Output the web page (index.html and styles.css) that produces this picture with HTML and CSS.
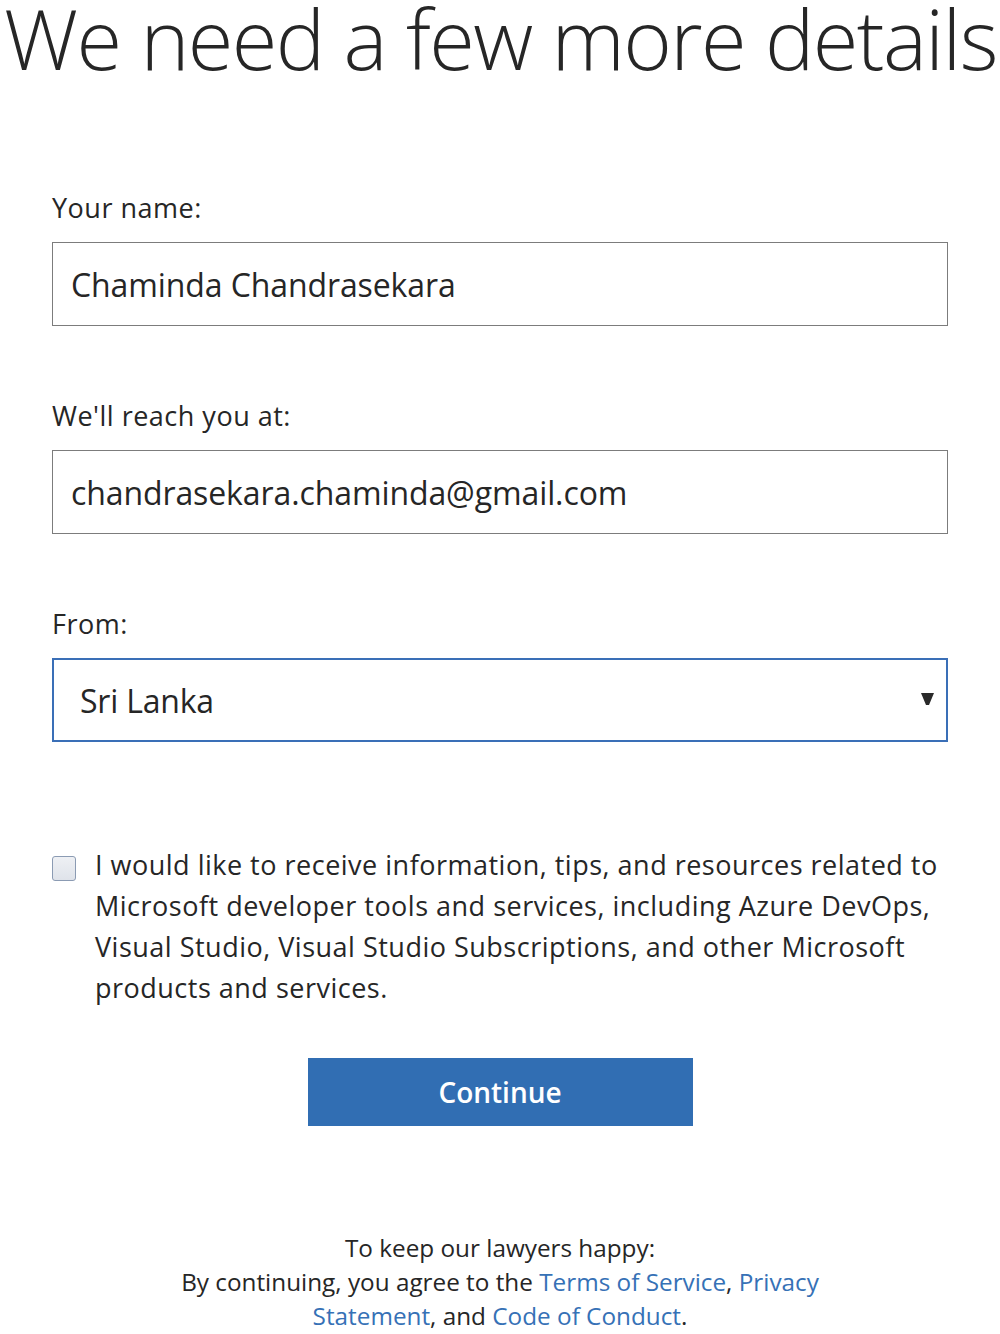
FILE: index.html
```html
<!DOCTYPE html>
<html lang="en">
<head>
<meta charset="utf-8">
<title>We need a few more details</title>
<link rel="stylesheet" href="styles.css">
</head>
<body>
<main class="page">
  <h1 class="title">We need a few more details</h1>
  <form class="form">
    <div class="field">
      <label class="label" for="name">Your name:</label>
      <input class="input" id="name" type="text" value="Chaminda Chandrasekara">
    </div>
    <div class="field">
      <label class="label" for="email">We'll reach you at:</label>
      <input class="input" id="email" type="text" value="chandrasekara.chaminda@gmail.com">
    </div>
    <div class="field">
      <label class="label" for="country">From:</label>
      <div class="select-wrap">
        <select class="select" id="country">
          <option>Sri Lanka</option>
        </select>
        <svg class="select-arrow" width="13" height="12" viewBox="0 0 13 12" aria-hidden="true">
          <polygon points="0,0 13,0 8,12 5,12" fill="#2a2a2a"/>
        </svg>
      </div>
    </div>
    <label class="consent">
      <span class="checkbox"></span>
      <span class="consent-text">I would like to receive information, tips, and resources related to Microsoft developer tools and services, including Azure DevOps, Visual Studio, Visual Studio Subscriptions, and other Microsoft products and services.</span>
    </label>
    <div class="actions">
      <button class="continue" type="button">Continue</button>
    </div>
  </form>
  <p class="legal">
    To keep our lawyers happy:<br>
    By continuing, you agree to the <a href="#">Terms of Service</a>, <a href="#">Privacy<br>Statement</a>, and <a href="#">Code of Conduct</a>.
  </p>
</main>
</body>
</html>
```
FILE: styles.css
```css
* { box-sizing: border-box; }
html, body { margin: 0; padding: 0; background: #ffffff; }
body {
  font-family: "Open Sans", "Noto Sans", "Liberation Sans", sans-serif;
  color: #262626;
}
.page { width: 1000px; }
.title {
  margin: 0 0 0 4px;
  font-weight: 300;
  font-size: 83px;
  line-height: 76px;
  letter-spacing: -1.6px;
  color: #262626;
  white-space: nowrap;
}
.form {
  padding: 116px 52px 0 52px;
}
.field { margin-bottom: 74px; }
.label {
  display: block;
  font-size: 27px;
  line-height: 32px;
  margin-bottom: 18px;
  letter-spacing: 0.5px;
}
.input {
  display: block;
  width: 100%;
  height: 84px;
  border: 1px solid #7c7c7c;
  border-radius: 0;
  padding: 0 0 0 18px;
  font-family: inherit;
  font-size: 32px;
  color: #262626;
  background: #fff;
  outline: none;
  letter-spacing: -0.1px;
}
.select-wrap { position: relative; }
.select {
  display: block;
  width: 100%;
  height: 84px;
  appearance: none;
  -webkit-appearance: none;
  border: 2px solid #3a6fb7;
  border-radius: 0;
  padding: 0 0 0 26px;
  font-family: inherit;
  font-size: 32px;
  color: #262626;
  background: #fff;
  outline: none;
  letter-spacing: -0.2px;
}
.select-arrow {
  position: absolute;
  right: 14px;
  top: 35px;
  pointer-events: none;
}
.consent {
  display: flex;
  gap: 19px;
  margin-top: 114px;
  align-items: flex-start;
}
.checkbox {
  flex: none;
  width: 24px;
  height: 25px;
  border: 1px solid #8b9bb3;
  border-radius: 3px;
  background: linear-gradient(#eef0f4, #dfe3ea);
}
.consent-text {
  font-size: 27px;
  line-height: 41px;
  margin-top: -12px;
  letter-spacing: 0.5px;
}
.actions {
  display: flex;
  justify-content: center;
  margin-top: 50px;
}
.continue {
  width: 385px;
  height: 68px;
  border: none;
  background: #316eb3;
  color: #ffffff;
  font-family: inherit;
  font-size: 28px;
  font-weight: 600;
  letter-spacing: 0;
  cursor: pointer;
}
.legal {
  margin: 105px 0 0 0;
  text-align: center;
  font-size: 24.3px;
  line-height: 34px;
  letter-spacing: 0;
  color: #262626;
}
.legal a {
  color: #3671b6;
  text-decoration: none;
}
```
